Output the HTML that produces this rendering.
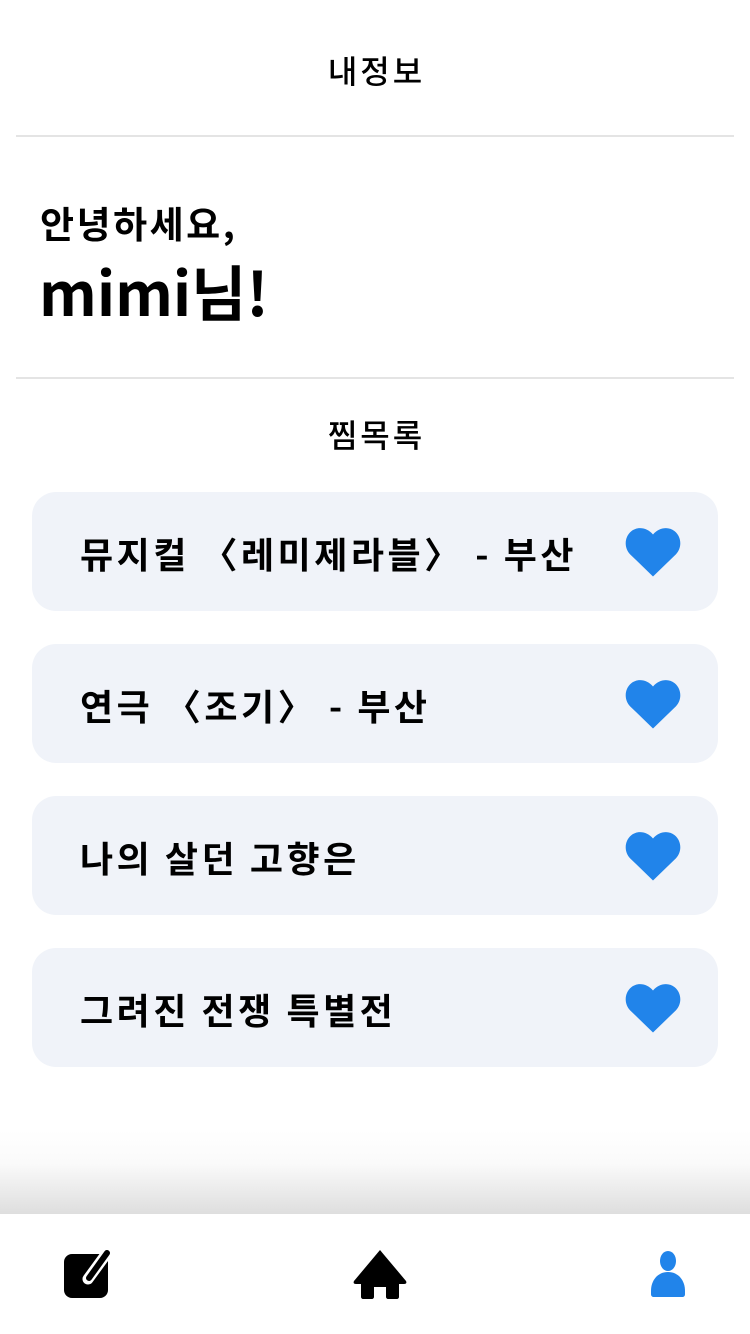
<!DOCTYPE html>
<html><head><meta charset="utf-8"><style>
body{margin:0;width:750px;height:1334px;background:#fff;font-family:"Noto Sans CJK KR","Liberation Sans",sans-serif;position:relative;overflow:hidden;color:#000}
.t{position:absolute;left:0;width:750px;text-align:center;font-size:32px;font-weight:500;letter-spacing:3px;text-indent:3px}
.hr{position:absolute;left:16px;width:718px;height:2px;background:#e4e4e4}
.card{position:absolute;left:32px;width:686px;height:119px;background:#f0f3f9;border-radius:24px}
.card span{position:absolute;left:48px;top:2px;line-height:119px;font-size:36px;font-weight:700;letter-spacing:3.5px}
.card svg{position:absolute;left:593px;top:35px}
</style></head><body>
<div class="t" style="top:48px;line-height:44px">내정보</div>
<div class="hr" style="top:135px"></div>
<div style="position:absolute;left:40px;top:196px;font-size:37px;font-weight:700;line-height:52px;letter-spacing:2.5px">안녕하세요,</div>
<div style="position:absolute;left:39px;top:248px;font-size:60px;font-weight:700;line-height:86px">mimi님!</div>
<div class="hr" style="top:377px"></div>
<div class="t" style="top:412px;line-height:44px">찜목록</div>
<div class="card" style="top:492px"><span>뮤지컬 〈레미제라블〉 - 부산</span><svg width="56" height="50" viewBox="0 0 24 21"><path d="M12 21L2.2 11.5C-.6 8.6-.2 3.9 2.7 1.6 5.4-.6 9.5 0 12 3c2.5-3 6.6-3.6 9.3-1.4 2.9 2.3 3.3 7 .5 9.9z" fill="#2184ea"/></svg></div>
<div class="card" style="top:644px"><span>연극 〈조기〉 - 부산</span><svg width="56" height="50" viewBox="0 0 24 21"><path d="M12 21L2.2 11.5C-.6 8.6-.2 3.9 2.7 1.6 5.4-.6 9.5 0 12 3c2.5-3 6.6-3.6 9.3-1.4 2.9 2.3 3.3 7 .5 9.9z" fill="#2184ea"/></svg></div>
<div class="card" style="top:796px"><span>나의 살던 고향은</span><svg width="56" height="50" viewBox="0 0 24 21"><path d="M12 21L2.2 11.5C-.6 8.6-.2 3.9 2.7 1.6 5.4-.6 9.5 0 12 3c2.5-3 6.6-3.6 9.3-1.4 2.9 2.3 3.3 7 .5 9.9z" fill="#2184ea"/></svg></div>
<div class="card" style="top:948px"><span>그려진 전쟁 특별전</span><svg width="56" height="50" viewBox="0 0 24 21"><path d="M12 21L2.2 11.5C-.6 8.6-.2 3.9 2.7 1.6 5.4-.6 9.5 0 12 3c2.5-3 6.6-3.6 9.3-1.4 2.9 2.3 3.3 7 .5 9.9z" fill="#2184ea"/></svg></div>
<div style="position:absolute;left:0;top:1130px;width:750px;height:84px;background:linear-gradient(#fff,#fafafa 40%,#dedede)"></div>
<svg style="position:absolute;left:0;top:1214px" width="750" height="120" viewBox="0 1214 750 120">
<rect x="0" y="1214" width="750" height="120" fill="#fff"/>
<rect x="64" y="1254" width="44" height="44" rx="8" fill="#000"/>
<line x1="107" y1="1253" x2="88" y2="1279" stroke="#fff" stroke-width="11" stroke-linecap="round"/>
<line x1="107" y1="1253" x2="89" y2="1278" stroke="#000" stroke-width="6" stroke-linecap="round"/>
<path d="M380 1250L354 1281c-1 2 0 3 2 3h5v13c0 1 1 2 2 2h9c1 0 2-1 2-2v-10h12v10c0 1 1 2 2 2h9c1 0 2-1 2-2v-13h5c2 0 3-1 2-3z" fill="#000"/>
<ellipse cx="668" cy="1261" rx="8" ry="10" fill="#2184ea"/>
<path d="M668 1272c10 0 17 8 17 19v3c0 2-1 3-3 3h-28c-2 0-3-1-3-3v-3c0-11 7-19 17-19z" fill="#2184ea"/>
</svg>
</body></html>
